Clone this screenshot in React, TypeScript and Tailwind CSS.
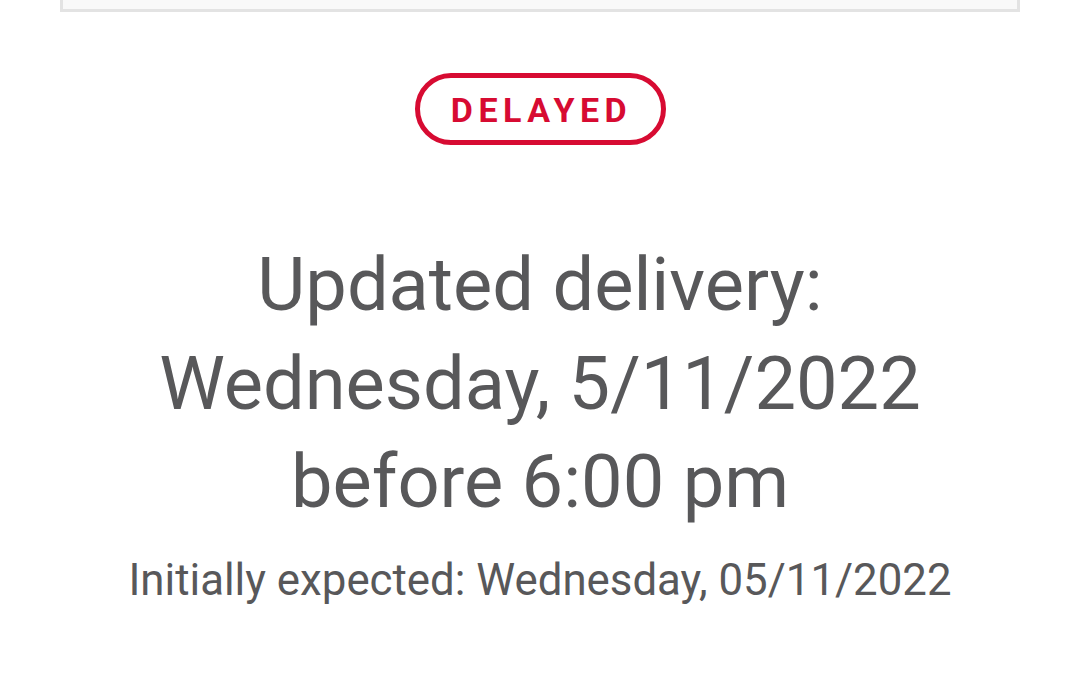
import React from "react";

export default function App() {
  return (
    <div className="w-[1080px] h-[675px] bg-white overflow-hidden" style={{ fontFamily: "Roboto, 'Noto Sans', sans-serif" }}>
      <div className="px-[60px]">
        <div className="h-[12px] bg-[#f9f9f9] border-x-[3px] border-b-[3px] border-[#e3e3e3]" />
      </div>
      <div className="flex flex-col items-center">
        <div className="mt-[61px] w-[251px] h-[72px] rounded-full border-[5px] border-[#d70b32] flex items-center justify-center">
          <span className="text-[34px] font-bold tracking-[5.5px] text-[#d70b32] leading-none pl-[3px] pt-[2px]">DELAYED</span>
        </div>
        <div className="mt-[91px] text-center text-[74px] leading-[98.5px] text-[#58585a]">
          <div>Updated delivery:</div>
          <div>Wednesday, 5/11/2022</div>
          <div>before 6:00 pm</div>
        </div>
        <div className="mt-[22px] text-center text-[43.8px] leading-[52px] text-[#58585a]">
          Initially expected: Wednesday, 05/11/2022
        </div>
      </div>
    </div>
  );
}
